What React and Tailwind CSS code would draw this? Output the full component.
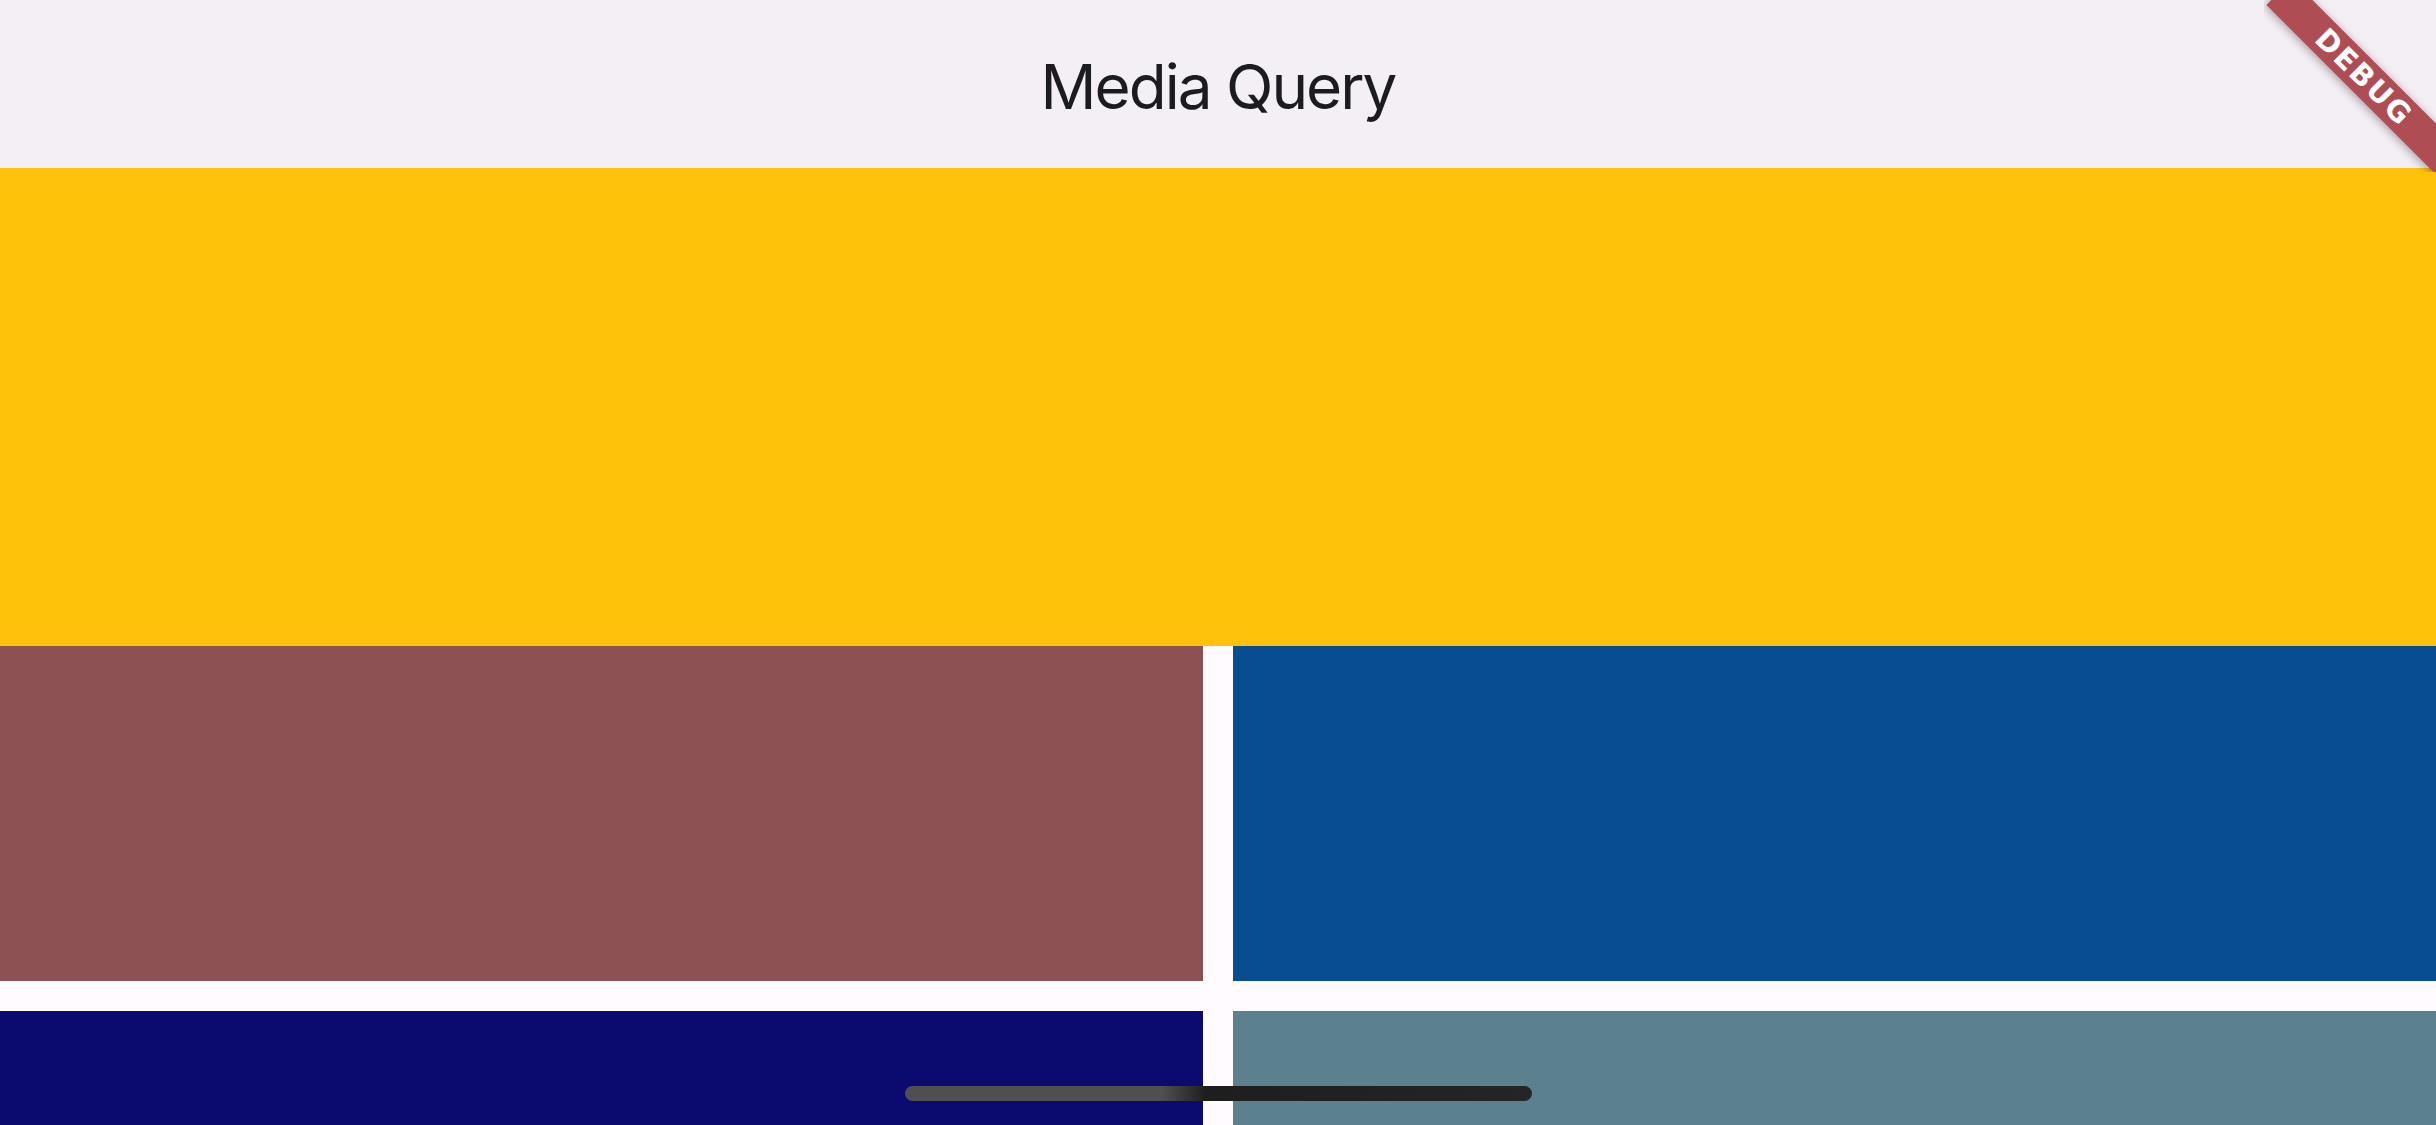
import React from 'react';

const DebugBanner = () => {
  return (
    <div className="absolute top-0 right-0 w-[172px] h-[172px] overflow-hidden pointer-events-none">
      <div
        className="absolute left-[-20px] top-[59px] w-[240px] h-[36px] rotate-45 bg-[#af4d54] shadow-[0_2px_10px_rgba(0,0,0,0.35)] flex items-center justify-center"
      >
        <span
          className="text-white text-[29px] font-black leading-none tracking-[2px]"
          style={{ fontFamily: '"DejaVu Sans", "Liberation Sans", sans-serif' }}
        >
          DEBUG
        </span>
      </div>
    </div>
  );
};

const App = () => {
  return (
    <div
      className="relative w-[2436px] h-[1125px] overflow-hidden bg-[#fffbfe]"
      style={{ fontFamily: 'Inter, "Liberation Sans", sans-serif' }}
    >
      <div className="h-[168px] bg-[#f3eff5] flex items-center justify-center">
        <h1 className="text-[62px] font-normal text-[#1c1b1f] tracking-[-2px] pt-[4px]">Media Query</h1>
      </div>

      <div className="h-[478px] bg-[#ffc20b]" />

      <div className="grid grid-cols-2 gap-x-[30px] gap-y-[30px]">
        <div className="h-[335px] bg-[#8d5154]" />
        <div className="h-[335px] bg-[#084c91]" />
        <div className="h-[335px] bg-[#0b0b6f]" />
        <div className="h-[335px] bg-[#5b808e]" />
      </div>

      <div className="absolute left-[905px] top-[1086px] w-[627px] h-[15px] rounded-full bg-[linear-gradient(90deg,#4f4f4f_0%,#4f4f4f_41%,#1e1e1e_48%,#252525_100%)]" />

      <DebugBanner />
    </div>
  );
};

export default App;
